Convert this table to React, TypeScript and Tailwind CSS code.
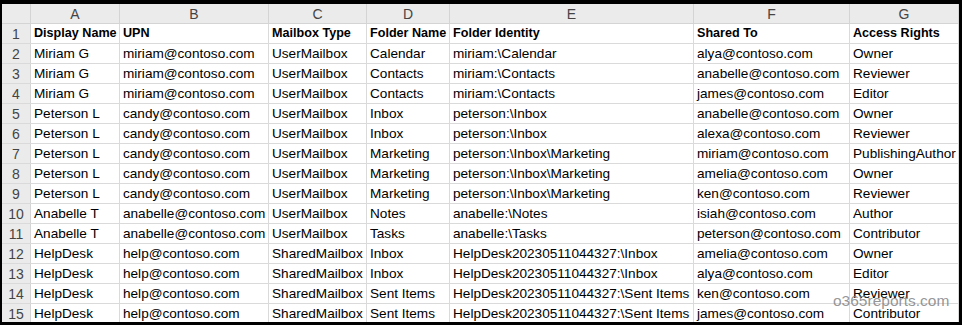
import React from "react";

const cols = [
  "w-[89px]",
  "w-[149px]",
  "w-[98px]",
  "w-[83px]",
  "w-[244px]",
  "w-[156px]",
  "w-[109px]",
];
const letters = ["A", "B", "C", "D", "E", "F", "G"];

const rows: string[][] = [
  ["Display Name", "UPN", "Mailbox Type", "Folder Name", "Folder Identity", "Shared To", "Access Rights"],
  ["Miriam G", "miriam@contoso.com", "UserMailbox", "Calendar", "miriam:\\Calendar", "alya@contoso.com", "Owner"],
  ["Miriam G", "miriam@contoso.com", "UserMailbox", "Contacts", "miriam:\\Contacts", "anabelle@contoso.com", "Reviewer"],
  ["Miriam G", "miriam@contoso.com", "UserMailbox", "Contacts", "miriam:\\Contacts", "james@contoso.com", "Editor"],
  ["Peterson L", "candy@contoso.com", "UserMailbox", "Inbox", "peterson:\\Inbox", "anabelle@contoso.com", "Owner"],
  ["Peterson L", "candy@contoso.com", "UserMailbox", "Inbox", "peterson:\\Inbox", "alexa@contoso.com", "Reviewer"],
  ["Peterson L", "candy@contoso.com", "UserMailbox", "Marketing", "peterson:\\Inbox\\Marketing", "miriam@contoso.com", "PublishingAuthor"],
  ["Peterson L", "candy@contoso.com", "UserMailbox", "Marketing", "peterson:\\Inbox\\Marketing", "amelia@contoso.com", "Owner"],
  ["Peterson L", "candy@contoso.com", "UserMailbox", "Marketing", "peterson:\\Inbox\\Marketing", "ken@contoso.com", "Reviewer"],
  ["Anabelle T", "anabelle@contoso.com", "UserMailbox", "Notes", "anabelle:\\Notes", "isiah@contoso.com", "Author"],
  ["Anabelle T", "anabelle@contoso.com", "UserMailbox", "Tasks", "anabelle:\\Tasks", "peterson@contoso.com", "Contributor"],
  ["HelpDesk", "help@contoso.com", "SharedMailbox", "Inbox", "HelpDesk20230511044327:\\Inbox", "amelia@contoso.com", "Owner"],
  ["HelpDesk", "help@contoso.com", "SharedMailbox", "Inbox", "HelpDesk20230511044327:\\Inbox", "alya@contoso.com", "Editor"],
  ["HelpDesk", "help@contoso.com", "SharedMailbox", "Sent Items", "HelpDesk20230511044327:\\Sent Items", "ken@contoso.com", "Reviewer"],
  ["HelpDesk", "help@contoso.com", "SharedMailbox", "Sent Items", "HelpDesk20230511044327:\\Sent Items", "james@contoso.com", "Contributor"],
];

export default function App() {
  return (
    <div
      className="w-[962px] h-[325px] bg-black pt-[4px] pl-[2px] pr-[3px] pb-[3px] overflow-hidden"
      style={{ fontFamily: '"Liberation Sans", Arial, sans-serif' }}
    >
      <div className="relative h-[318px] w-[957px] overflow-hidden bg-white">
        <div className="flex h-[20px] bg-[#ebebeb] border-b border-[#d4d4d4]">
          <div className="w-[29px] shrink-0 border-r border-[#d4d4d4]" />
          {letters.map((l, i) => (
            <div
              key={l}
              className={`${cols[i]} shrink-0 border-r border-[#d4d4d4] flex items-center justify-center text-[14px] leading-none text-[#444]`}
            >
              {l}
            </div>
          ))}
        </div>
        {rows.map((r, ri) => (
          <div key={ri} className="flex h-[20px] border-b border-[#dadada]">
            <div className="w-[29px] shrink-0 bg-[#ebebeb] border-r border-[#d4d4d4] flex items-center justify-center text-[14px] leading-none text-[#444]">
              {ri + 1}
            </div>
            {r.map((c, ci) => (
              <div
                key={ci}
                className={`${cols[ci]} shrink-0 border-r border-[#dadada] flex items-center pl-[3px] overflow-hidden whitespace-nowrap leading-none text-black ${
                  ri === 0 ? "font-bold text-[12.6px]" : "text-[13.6px]"
                }`}
              >
                {c}
              </div>
            ))}
          </div>
        ))}
        <div className="absolute left-[831px] top-[289px] text-[15.5px] leading-none text-[#7a7a7a]/80 pointer-events-none">
          o365reports.com
        </div>
      </div>
    </div>
  );
}
